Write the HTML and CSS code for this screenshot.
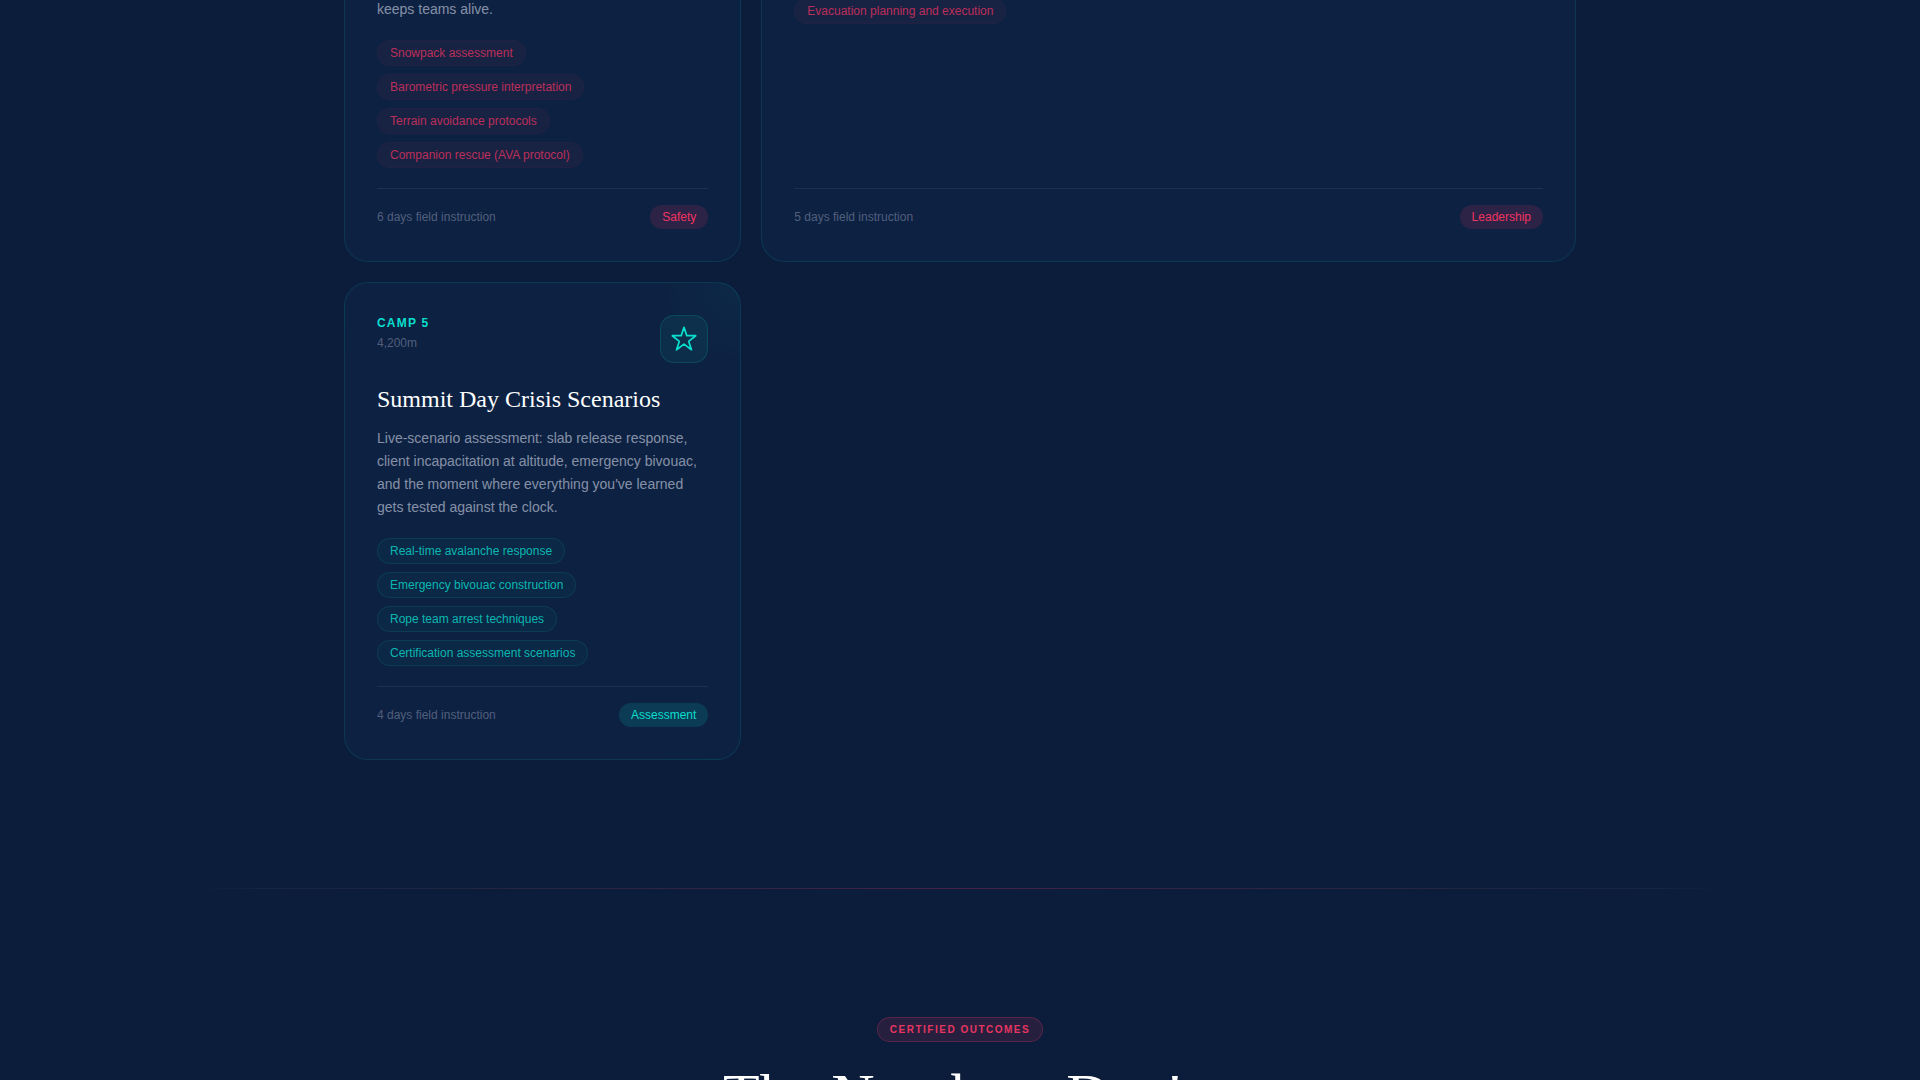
FILE: index.html
```html
<!DOCTYPE html>
<html lang="en">
<head>
  <meta charset="UTF-8" />
  <meta name="viewport" content="width=device-width, initial-scale=1.0" />
  <title>Alpine Guide Certification</title>
  <link rel="stylesheet" href="styles.css">
</head>
<body>
  <!-- Camps -->
  <section class="camps">
    <article class="card coral">
      <p class="desc">keeps teams alive.</p>
      <ul class="skills">
        <li>Snowpack assessment</li>
        <li>Barometric pressure interpretation</li>
        <li>Terrain avoidance protocols</li>
        <li>Companion rescue (AVA protocol)</li>
      </ul>
      <div class="card-footer">
        <span>6 days field instruction</span>
        <span class="tag">Safety</span>
      </div>
    </article>

    <article class="card coral wide">
      <ul class="skills">
        <li>Evacuation planning and execution</li>
      </ul>
      <div class="card-footer">
        <span>5 days field instruction</span>
        <span class="tag">Leadership</span>
      </div>
    </article>

    <article class="card teal glow">
      <div class="card-header">
        <div>
          <div class="camp">CAMP 5</div>
          <div class="altitude">4,200m</div>
        </div>
        <div class="icon">
          <svg width="28" height="28" viewBox="0 0 24 24" fill="none" stroke="currentColor" stroke-width="1.5" stroke-linejoin="round">
            <path d="M12 2l2.4 7.2h7.6l-6 4.8 2.4 7.2-6.4-4.8-6.4 4.8 2.4-7.2-6-4.8h7.6z" />
          </svg>
        </div>
      </div>
      <h3>Summit Day Crisis Scenarios</h3>
      <p class="desc">Live-scenario assessment: slab release response, client incapacitation at altitude, emergency bivouac, and the moment where everything you've learned gets tested against the clock.</p>
      <ul class="skills">
        <li>Real-time avalanche response</li>
        <li>Emergency bivouac construction</li>
        <li>Rope team arrest techniques</li>
        <li>Certification assessment scenarios</li>
      </ul>
      <div class="card-footer">
        <span>4 days field instruction</span>
        <span class="tag">Assessment</span>
      </div>
    </article>
  </section>

  <hr class="divider">

  <!-- Outcomes -->
  <section class="outcomes">
    <span class="eyebrow">CERTIFIED OUTCOMES</span>
    <h2>The Numbers Don't</h2>
  </section>
</body>
</html>
```

FILE: styles.css
```css
* {
  box-sizing: border-box;
}

body {
  margin: 0;
  height: 100vh;
  overflow: hidden;
  display: flow-root;
  background: #0b1d3a;
  color: #fff;
  font-family: "Liberation Sans", Arial, sans-serif;
}

h2, h3, p, ul {
  margin: 0;
  padding: 0;
}

h2, h3 {
  font-family: "Liberation Serif", "Times New Roman", serif;
  font-weight: 400;
}

/* Camps */
.camps {
  max-width: 1280px;
  margin: -35px auto 128px;
  padding: 0 24px;
  display: grid;
  grid-template-columns: repeat(3, 1fr);
  gap: 20px;
}

.card {
  display: flex;
  flex-direction: column;
  padding: 32px;
  background: #0d2142;
  border: 1px solid rgba(0, 210, 220, 0.12);
  border-radius: 24px;
}

.card.wide {
  grid-column: span 2;
}

.card.glow {
  background: radial-gradient(circle at top right, rgba(0, 229, 200, 0.04), transparent 88px) #0d2142;
}

.coral {
  --accent: 240, 52, 98;
  --chip-bg: 0.05;
  --chip-border: 0.04;
  --chip-text: 0.75;
}

.teal {
  --accent: 10, 222, 204;
  --chip-bg: 0.04;
  --chip-border: 0.1;
  --chip-text: 0.8;
}

.card-header {
  display: flex;
  justify-content: space-between;
  margin-bottom: 21px;
}

.camp {
  font-size: 12px;
  font-weight: 700;
  line-height: 16px;
  letter-spacing: 0.1em;
  color: rgb(var(--accent));
}

.altitude {
  margin-top: 4px;
  font-size: 12px;
  line-height: 16px;
  color: rgba(230, 230, 255, 0.32);
}

.icon {
  width: 48px;
  height: 48px;
  display: flex;
  align-items: center;
  justify-content: center;
  border: 1px solid rgba(var(--accent), 0.15);
  border-radius: 14px;
  background: rgba(var(--accent), 0.07);
  color: rgb(var(--accent));
}

.card h3 {
  margin-bottom: 12px;
  font-size: 24px;
  line-height: 31px;
}

.desc {
  margin-bottom: 19px;
  font-size: 14px;
  line-height: 23px;
  color: rgba(235, 240, 255, 0.55);
}

.skills {
  display: flex;
  flex-direction: column;
  align-items: flex-start;
  gap: 8px;
  margin-bottom: 20px;
  list-style: none;
}

.skills li {
  padding: 4px 12px;
  border: 1px solid rgba(var(--accent), var(--chip-border));
  border-radius: 13px;
  background: rgba(var(--accent), var(--chip-bg));
  color: rgba(var(--accent), var(--chip-text));
  font-size: 12px;
  line-height: 16px;
}

.card-footer {
  display: flex;
  align-items: center;
  justify-content: space-between;
  margin-top: auto;
  padding-top: 16px;
  border-top: 1px solid rgba(255, 255, 255, 0.07);
  font-size: 12px;
  line-height: 16px;
  color: rgba(230, 230, 255, 0.32);
}

.tag {
  padding: 4px 12px;
  border-radius: 12px;
  background: rgba(var(--accent), 0.14);
  color: rgb(var(--accent));
}

.divider {
  height: 1px;
  margin: 0 10%;
  border: 0;
  background: linear-gradient(90deg, transparent, rgba(255, 255, 255, 0.04) 5%, rgba(240, 52, 98, 0.25) 50%, rgba(255, 255, 255, 0.04) 95%, transparent);
}

/* Outcomes */
.outcomes {
  display: flex;
  flex-direction: column;
  align-items: center;
  padding: 128px 24px;
}

.eyebrow {
  padding: 4px 12px;
  border: 1px solid rgba(240, 52, 98, 0.25);
  border-radius: 13px;
  background: rgba(240, 52, 98, 0.12);
  color: #e63560;
  font-size: 10px;
  font-weight: 700;
  line-height: 15px;
  letter-spacing: 0.15em;
}

.outcomes h2 {
  margin-top: 20px;
  font-size: 60px;
  line-height: 66px;
}
```
